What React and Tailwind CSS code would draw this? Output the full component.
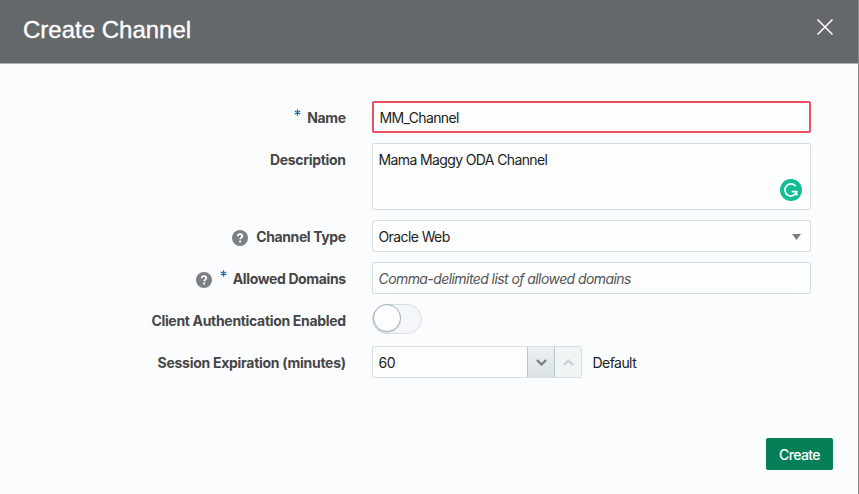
import React from "react";

function Help() {
  return (
    <svg className="relative top-[1px] size-4 shrink-0" viewBox="0 0 16 16">
      <circle cx="8" cy="8" r="8" fill="#7b8083" />
      <path d="M5.7 6.3C5.7 4.9 6.7 4.1 8 4.1s2.3.8 2.3 2c0 1.5-2.1 1.6-2.1 3.2" fill="none" stroke="#fff" strokeWidth="1.8" />
      <rect x="7.2" y="10.5" width="1.9" height="1.9" fill="#fff" />
    </svg>
  );
}

function Required() {
  return (
    <svg className="relative -top-[6px] h-[7px] w-[7px] shrink-0" viewBox="0 0 7 7">
      <path d="M3.5 0.3v6.4M0.8 1.9l5.4 3.2M6.2 1.9L0.8 5.1" stroke="#1c6cab" strokeWidth="1.2" />
    </svg>
  );
}

function Row({ label, labelClass, prefix, height, children }) {
  return (
    <div className={`flex ${height}`}>
      <div className="mr-[26.25px] flex h-8 w-[345.75px] shrink-0 items-center justify-end pt-[2px] font-bold text-[#464646]">
        {prefix}
        <span className={`whitespace-nowrap ${labelClass}`}>{label}</span>
      </div>
      {children}
    </div>
  );
}

export default function App() {
  return (
    <div className="flex h-[494px] w-[859px] flex-col overflow-hidden border-r border-[#8c8c8c] bg-[#fbfcfe] font-['Inter',sans-serif] text-[14px] leading-5 text-[#222]">
      <header className="flex h-16 shrink-0 items-start justify-between border-b border-[#a5b2bb] bg-[#65686b] pl-[23px] pr-[25px]">
        <h1 className="whitespace-nowrap pt-[15px] font-['Liberation_Sans',sans-serif] text-[24px] leading-[30px] text-white [-webkit-text-stroke:0.35px_#fff]">Create Channel</h1>
        <svg className="mt-[19px] size-4" viewBox="0 0 16 16">
          <path d="M0.5 0.5l15 15M15.5 0.5l-15 15" stroke="#fff" strokeWidth="1.5" />
        </svg>
      </header>
      <main className="flex flex-col gap-[10px] pt-[37px]">
        <Row label="Name" labelClass="tracking-[-0.36px]" height="h-8" prefix={<span className="mr-[6px] flex"><Required /></span>}>
          <div className="flex h-8 w-[439px] items-center rounded-[2px] border-2 border-[#ea5160] bg-[#fdfdfe] pl-[5.5px] pt-[2px] tracking-[-0.63px]">MM_Channel</div>
        </Row>
        <Row label="Description" labelClass="tracking-[-0.31px]" height="h-[67px]">
          <div className="flex h-[67px] w-[439px] justify-between rounded-[2px] border border-[#d6dfe1] bg-[#fdfdfe] pl-[5.5px] pr-2 pt-[6px] tracking-[-0.62px]">
            <span>Mama Maggy ODA Channel</span>
            <svg className="mt-[29px] size-[22px]" viewBox="0 0 22 22">
              <circle cx="11" cy="11" r="11" fill="#0fbf93" />
              <path d="M15.7 7.3A6 6 0 1 0 16.4 13.4M11.7 12.7h5v3.8" fill="none" stroke="#fff" strokeWidth="1.7" />
            </svg>
          </div>
        </Row>
        <Row label="Channel Type" labelClass="tracking-[-0.38px]" height="h-8" prefix={<span className="mr-2 flex"><Help /></span>}>
          <div className="flex h-8 w-[439px] items-center justify-between rounded-[2px] border border-[#d6dfe1] bg-[#fdfdfe] pl-[5.5px] pr-[9px] tracking-[-0.6px]">
            <span className="pt-[2px]">Oracle Web</span>
            <svg className="mt-[2px] h-[6px] w-[9px]" viewBox="0 0 9 6"><path d="M0 0h9L4.5 6z" fill="#777e82" /></svg>
          </div>
        </Row>
        <Row label="Allowed Domains" labelClass="tracking-[-0.37px]" height="h-8" prefix={<span className="mr-[6px] flex items-center gap-2"><Help /><Required /></span>}>
          <div className="flex h-8 w-[439px] items-center rounded-[2px] border border-[#d0dfe3] bg-[#fdfdfe] pl-[5.5px] pt-[2px] italic tracking-[-0.575px] text-[#555]">Comma-delimited list of allowed domains</div>
        </Row>
        <Row label="Client Authentication Enabled" labelClass="tracking-[-0.32px]" height="h-8">
          <div className="flex h-[30px] w-[50px] rounded-full border border-[#d6dfe1] bg-[#f4f6f8]">
            <div className="-mt-px size-[28px] rounded-full border border-[#a0afb8] bg-[#fdfdfe] shadow-[0_1px_1px_#a0afb866]" />
          </div>
        </Row>
        <Row label="Session Expiration (minutes)" labelClass="tracking-[-0.28px]" height="h-8">
          <div className="flex h-8 w-[210px] overflow-hidden rounded-[2px] border border-[#d6dfe1] bg-[#fdfdfe]">
            <div className="flex-1 pl-[5.5px] pt-[6px] tracking-[-0.5px]">60</div>
            <div className="flex w-[28px] items-center justify-center border-x border-[#b6c6ce] bg-linear-to-b from-[#edf0f1] to-[#dbe1e4]">
              <svg className="h-[7px] w-[11px]" viewBox="0 0 11 7"><path d="M1 1l4.5 4.5L10 1" fill="none" stroke="#757b7f" strokeWidth="2.2" /></svg>
            </div>
            <div className="flex w-[26px] items-center justify-center bg-[#f1f4f5]">
              <svg className="h-[7px] w-[11px]" viewBox="0 0 11 7"><path d="M1 6l4.5-4.5L10 6" fill="none" stroke="#ccd0d2" strokeWidth="2.2" /></svg>
            </div>
          </div>
          <span className="ml-[10.5px] pt-[7px] tracking-[-0.55px]">Default</span>
        </Row>
      </main>
      <footer className="mt-[60px] flex justify-end pr-[25px]">
        <button className="h-8 w-[67px] rounded-[2px] bg-[#047f58] pt-[2px] font-medium tracking-[-0.6px] text-white">Create</button>
      </footer>
    </div>
  );
}
